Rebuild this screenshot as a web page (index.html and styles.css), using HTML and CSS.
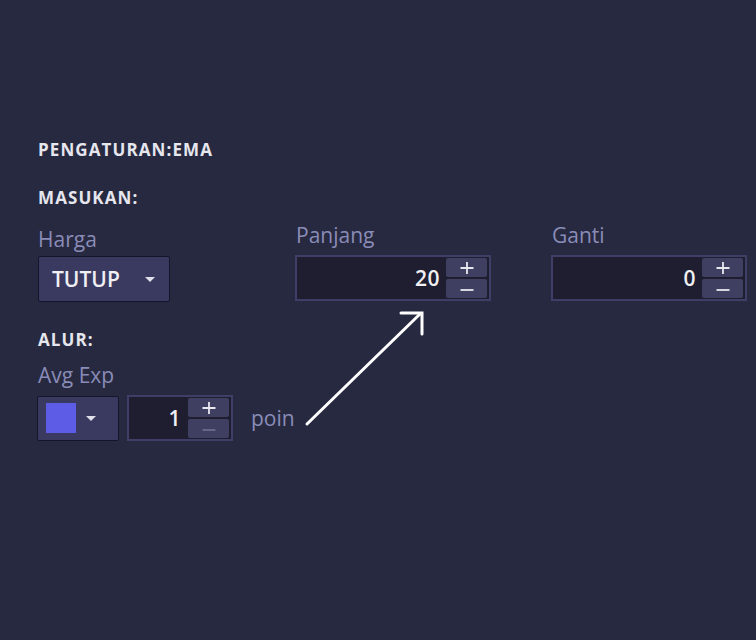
FILE: index.html
```html
<!DOCTYPE html>
<html>
<head>
<meta charset="utf-8">
<link rel="stylesheet" href="styles.css">
</head>
<body>
<div class="panel">
  <div class="heading title">PENGATURAN:EMA</div>
  <div class="heading sub">MASUKAN:</div>
  <div class="inputs">
    <div class="field field-harga">
      <div class="label">Harga</div>
      <div class="select">
        <span class="select-text">TUTUP</span>
        <span class="caret"></span>
      </div>
    </div>
    <div class="field">
      <div class="label">Panjang</div>
      <div class="spinner wide">
        <span class="value">20</span>
        <div class="btns">
          <div class="btn"><svg width="14" height="14" viewBox="0 0 14 14"><path d="M0.5 7H13.5M7 1V13" stroke="#e8e8f0" stroke-width="1.8"/></svg></div>
          <div class="btn"><svg width="14" height="14" viewBox="0 0 14 14"><path d="M0.5 8H13.5" stroke="#e8e8f0" stroke-width="1.8"/></svg></div>
        </div>
      </div>
    </div>
    <div class="field">
      <div class="label">Ganti</div>
      <div class="spinner wide">
        <span class="value">0</span>
        <div class="btns">
          <div class="btn"><svg width="14" height="14" viewBox="0 0 14 14"><path d="M0.5 7H13.5M7 1V13" stroke="#e8e8f0" stroke-width="1.8"/></svg></div>
          <div class="btn"><svg width="14" height="14" viewBox="0 0 14 14"><path d="M0.5 8H13.5" stroke="#e8e8f0" stroke-width="1.8"/></svg></div>
        </div>
      </div>
    </div>
  </div>
  <div class="heading alur">ALUR:</div>
  <div class="label label-avg">Avg Exp</div>
  <div class="plot-row">
    <div class="color-select">
      <span class="swatch"></span>
      <span class="caret"></span>
    </div>
    <div class="spinner small">
      <span class="value">1</span>
      <div class="btns">
        <div class="btn"><svg width="14" height="14" viewBox="0 0 14 14"><path d="M0.5 7H13.5M7 1V13" stroke="#e8e8f0" stroke-width="1.8"/></svg></div>
        <div class="btn"><svg width="14" height="14" viewBox="0 0 14 14"><path d="M0.5 8H13.5" stroke="#6c6c8e" stroke-width="1.8"/></svg></div>
      </div>
    </div>
    <span class="poin">poin</span>
  </div>
  <svg class="arrow" width="130" height="125" viewBox="0 0 130 125">
    <path d="M8 117 L121 7" stroke="#ffffff" stroke-width="3" fill="none" stroke-linecap="round"/>
    <path d="M102 6 L123 6 L123 27" stroke="#ffffff" stroke-width="3" fill="none" stroke-linecap="round" stroke-linejoin="miter"/>
  </svg>
</div>
</body>
</html>
```

FILE: styles.css
```css
html, body {
  margin: 0;
  padding: 0;
  background: #272940;
  width: 756px;
  height: 640px;
  overflow: hidden;
}
.panel {
  position: relative;
  padding: 140px 0 0 38px;
  font-family: "Open Sans", "Noto Sans", sans-serif;
  color: #e4e4ec;
}
.heading {
  font-size: 17px;
  font-weight: 700;
  color: #e6e6ee;
  line-height: 20px;
  letter-spacing: 1.1px;
}
.sub {
  margin-top: 28px;
}
.inputs {
  display: grid;
  grid-template-columns: 257px 256px 205px;
  margin-top: 14px;
}
.field {
  display: flex;
  flex-direction: column;
}
.label {
  font-size: 21px;
  line-height: 26px;
  height: 26px;
  color: #8a8cb8;
}
.field .label {
  margin-bottom: 7px;
  padding-left: 1px;
}
.field-harga {
  padding-top: 4px;
}
.field-harga .label {
  margin-bottom: 4px;
  padding-left: 0;
}
.select {
  width: 130px;
  height: 44px;
  background: #3a3a60;
  border: 1px solid #15152a;
  border-radius: 2px;
  display: flex;
  align-items: center;
}
.select-text {
  font-size: 21px;
  font-weight: 600;
  color: #f0f0f4;
  margin-left: 13px;
  flex: 1;
}
.caret {
  width: 0;
  height: 0;
  border-left: 5px solid transparent;
  border-right: 5px solid transparent;
  border-top: 5px solid #e0e0ea;
  margin-right: 14px;
}
.spinner {
  display: flex;
  align-items: center;
  background: #1e1e30;
  border: 2px solid #3e3e66;
  box-sizing: border-box;
  height: 46px;
  padding: 0 2px;
}
.spinner.wide {
  width: 196px;
}
.value {
  flex: 1;
  text-align: right;
  font-size: 21px;
  font-weight: 600;
  color: #f0f0f4;
  padding-right: 6px;
  letter-spacing: 0.5px;
}
.btns {
  display: flex;
  flex-direction: column;
  gap: 2px;
  width: 41px;
}
.btn {
  height: 19px;
  background: #3f3f62;
  border-radius: 2px;
  display: flex;
  align-items: center;
  justify-content: center;
}
.alur {
  margin-top: 28px;
}
.label-avg {
  margin-top: 12px;
}
.plot-row {
  display: flex;
  align-items: center;
  margin-top: 7px;
  margin-left: -1px;
}
.color-select {
  width: 80px;
  height: 43px;
  background: #3a3a60;
  border: 1px solid #15152a;
  border-radius: 2px;
  display: flex;
  align-items: center;
}
.swatch {
  width: 30px;
  height: 30px;
  background: #5c5ce6;
  margin-left: 8px;
  margin-right: 10px;
}
.color-select .caret {
  margin-right: 0;
}
.spinner.small {
  width: 106px;
  margin-left: 8px;
}
.spinner.small .value {
  padding-right: 7px;
}
.poin {
  font-size: 21px;
  color: #8a8cb8;
  margin-left: 18px;
}
.arrow {
  position: absolute;
  left: 299px;
  top: 307px;
}
```
